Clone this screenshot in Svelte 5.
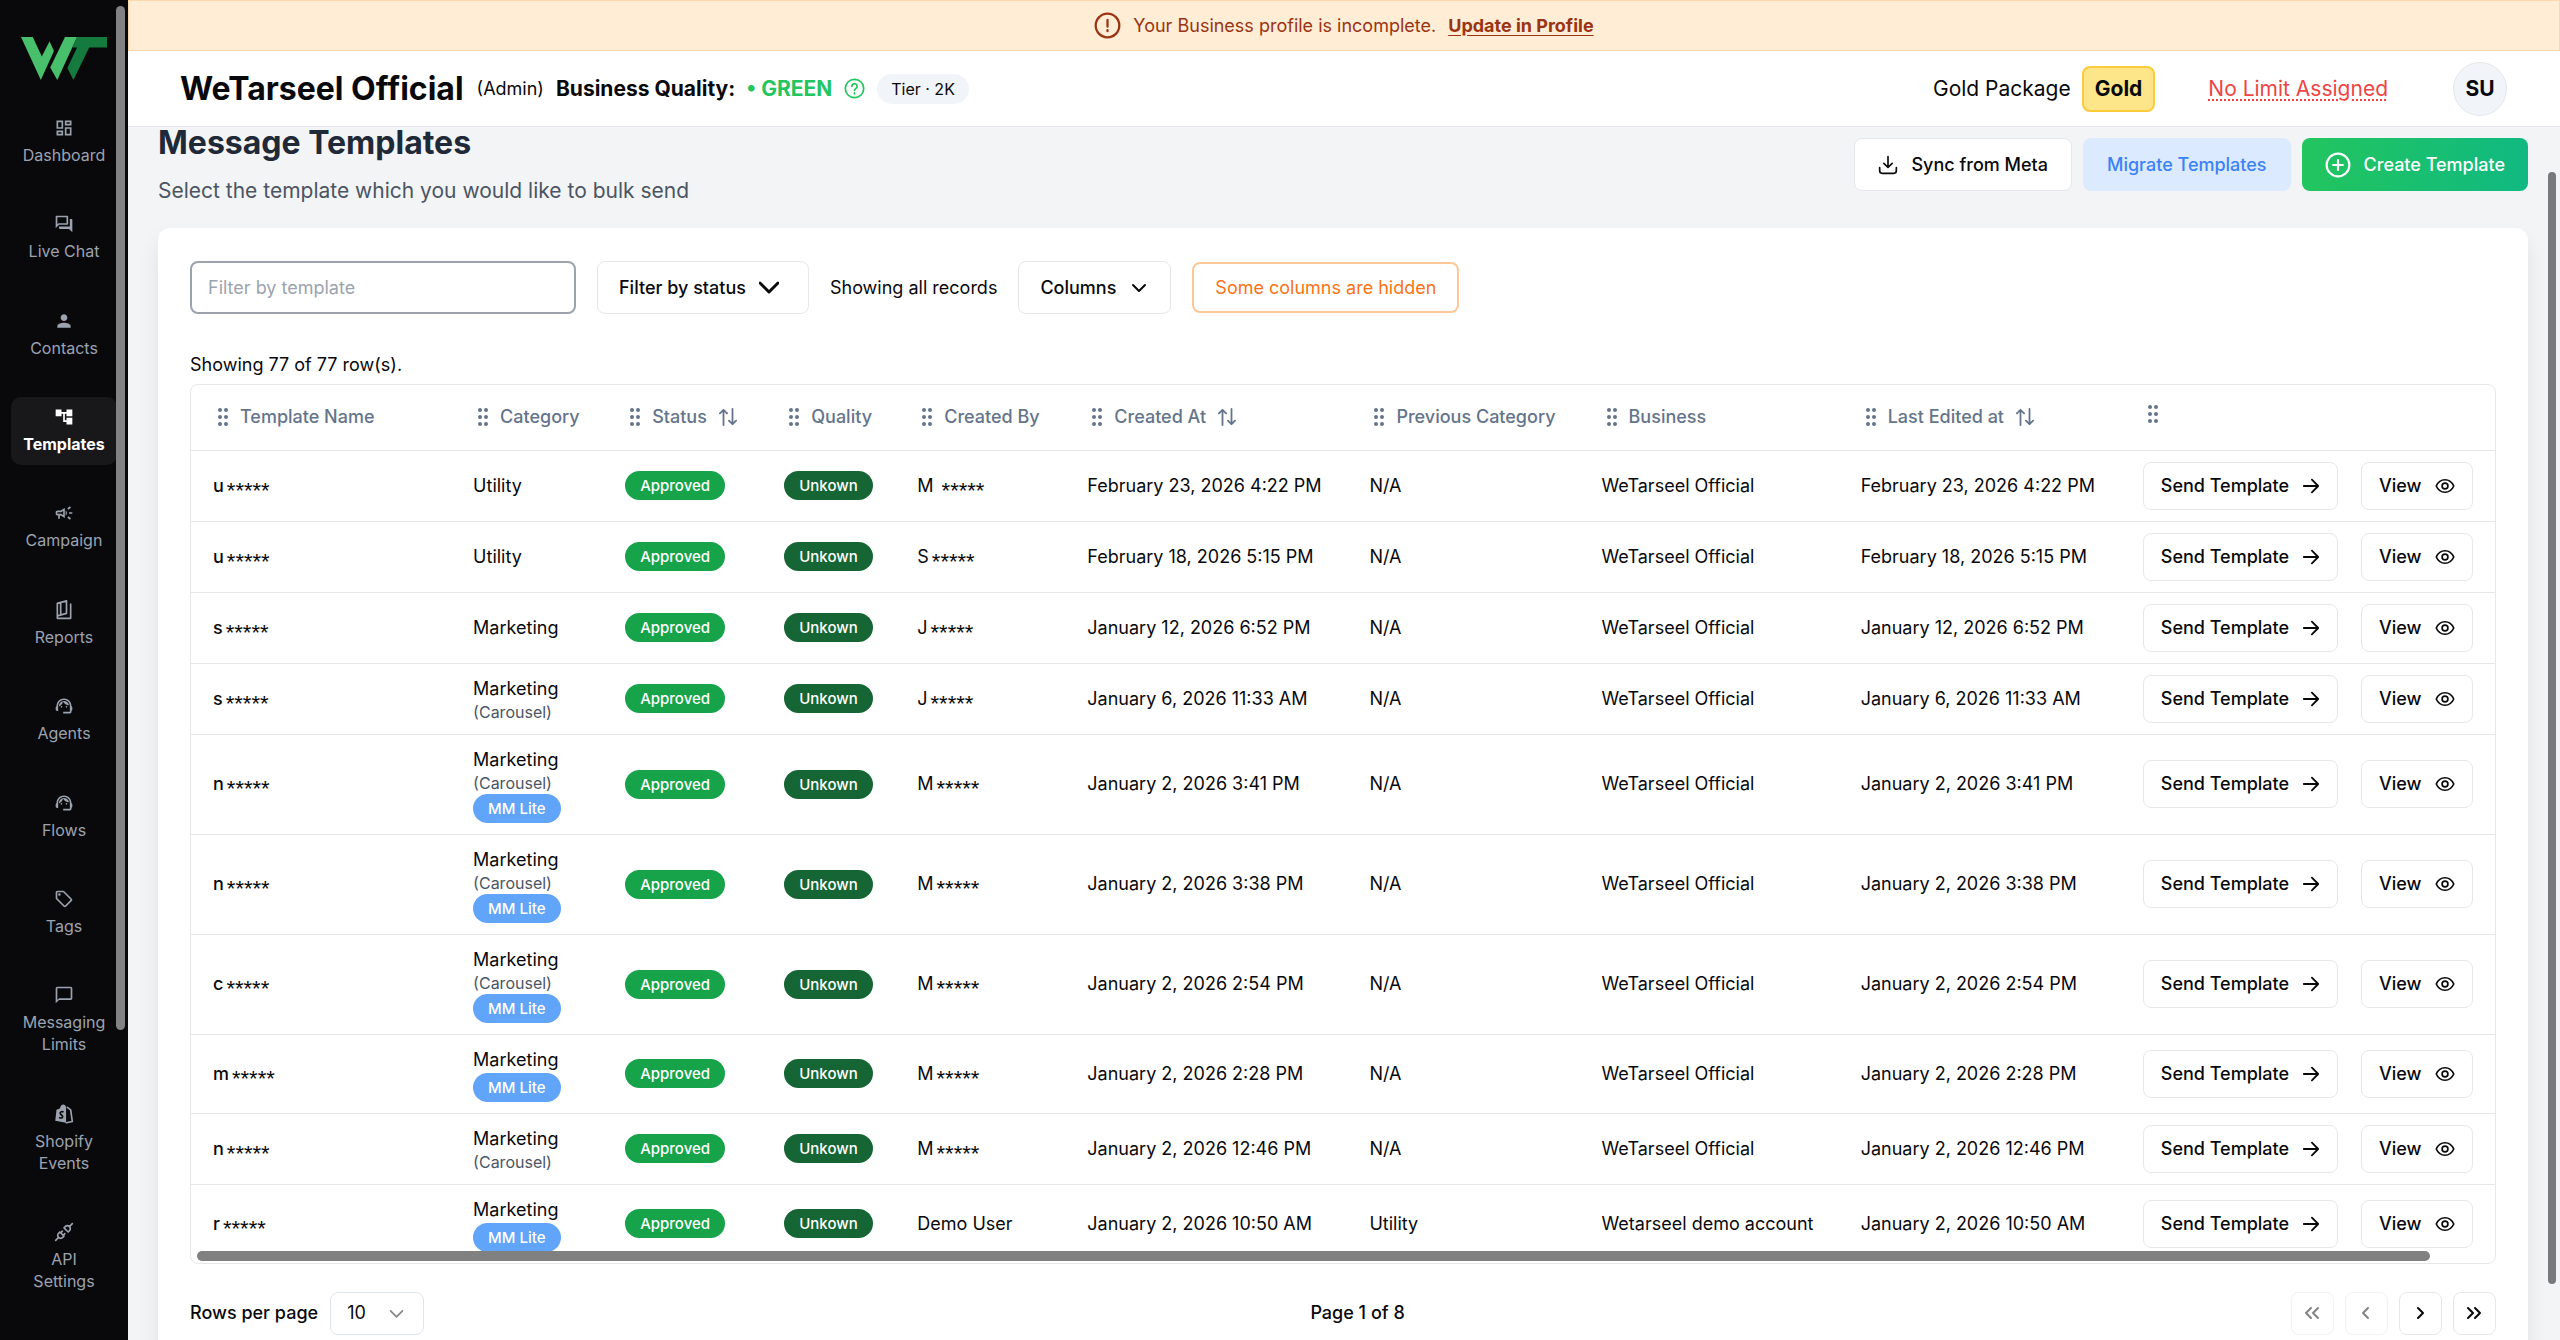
<script>
  let filter = '';
  let pageSize = '10';

  const navItems = [
    { label: 'Dashboard', icon: 'dashboard' },
    { label: 'Live Chat', icon: 'chat' },
    { label: 'Contacts', icon: 'person' },
    { label: 'Templates', icon: 'tree', active: true },
    { label: 'Campaign', icon: 'campaign' },
    { label: 'Reports', icon: 'reports' },
    { label: 'Agents', icon: 'agent' },
    { label: 'Flows', icon: 'agent' },
    { label: 'Tags', icon: 'tag' },
    { label: 'Messaging Limits', icon: 'bubble' },
    { label: 'Shopify Events', icon: 'shopify' },
    { label: 'API Settings', icon: 'plug' },
  ];

  const filledIcons = {
    dashboard: 'M19 5v2h-4V5h4M9 5v6H5V5h4m10 8v6h-4v-6h4M9 17v2H5v-2h4M21 3h-8v6h8V3zM11 3H3v10h8V3zm10 8h-8v10h8V11zm-10 4H3v6h8v-6z',
    chat: 'M15 4v7H5.17L4 12.17V4h11m1-2H3c-.55 0-1 .45-1 1v14l4-4h10c.55 0 1-.45 1-1V3c0-.55-.45-1-1-1zm5 4h-2v9H6v2c0 .55.45 1 1 1h11l4 4V7c0-.55-.45-1-1-1z',
    person: 'M12 12c2.21 0 4-1.79 4-4s-1.79-4-4-4-4 1.79-4 4 1.79 4 4 4zm0 2c-2.67 0-8 1.34-8 4v2h16v-2c0-2.66-5.33-4-8-4z',
    tree: 'M22 11V3h-7v3H9V3H2v8h7V8h2v10h4v3h7v-8h-7v3h-2V8h2v3z',
    campaign: 'M18 11v2h4v-2h-4zM16 17.61c.96.71 2.21 1.65 3.2 2.39.4-.53.8-1.07 1.2-1.6-.99-.74-2.24-1.68-3.2-2.4-.4.54-.8 1.08-1.2 1.61zM20.4 5.6c-.4-.53-.8-1.07-1.2-1.6-.99.74-2.24 1.68-3.2 2.4.4.53.8 1.07 1.2 1.6.96-.72 2.21-1.65 3.2-2.4zM4 9c-1.1 0-2 .9-2 2v2c0 1.1.9 2 2 2h1v4h2v-4h1l5 3V6L8 9H4zm5.03 1.71L11 9.53v4.94l-1.97-1.18-.48-.29H4v-2h4.55l.48-.29zM15.5 12c0-1.33-.58-2.53-1.5-3.35v6.69c.92-.81 1.5-2.01 1.5-3.34z',
    agent: 'M21 12.22C21 6.73 16.74 3 12 3c-4.69 0-9 3.65-9 9.28-.6.34-1 .98-1 1.72v2c0 1.1.9 2 2 2h1v-6.1c0-3.87 3.13-7 7-7s7 3.13 7 7V19h-8v2h8c1.1 0 2-.9 2-2v-1.22c.59-.31 1-.92 1-1.64v-2.3c0-.7-.41-1.31-1-1.62zM9 12a1 1 0 1 0 0 2 1 1 0 0 0 0-2zM15 12a1 1 0 1 0 0 2 1 1 0 0 0 0-2zM18 11.03C17.52 8.18 15.04 6 12.05 6c-3.03 0-6.29 2.51-6.03 6.45 2.47-1.01 4.33-3.21 4.86-5.89 1.31 2.63 4 4.44 7.12 4.47z',
    tag: 'M21.41 11.58l-9-9C12.05 2.22 11.55 2 11 2H4c-1.1 0-2 .9-2 2v7c0 .55.22 1.05.59 1.42l9 9c.36.36.86.58 1.41.58s1.05-.22 1.41-.59l7-7c.37-.36.59-.86.59-1.41s-.23-1.06-.59-1.42zM13 20.01L4 11V4h7v-.01l9 9-7 7.02zM6.5 5a1.5 1.5 0 1 0 0 3 1.5 1.5 0 0 0 0-3z',
    bubble: 'M20 2H4c-1.1 0-2 .9-2 2v18l4-4h14c1.1 0 2-.9 2-2V4c0-1.1-.9-2-2-2zm0 14H6l-2 2V4h16v12z',
  };

  const columns = [
    { label: 'Template Name', width: 260 },
    { label: 'Category', width: 152 },
    { label: 'Status', width: 159, sort: true },
    { label: 'Quality', width: 133 },
    { label: 'Created By', width: 170 },
    { label: 'Created At', width: 282, sort: true },
    { label: 'Previous Category', width: 232 },
    { label: 'Business', width: 259 },
    { label: 'Last Edited at', width: 282, sort: true },
    { label: '', width: 374 },
  ];
  const totalWidth = columns.reduce((sum, c) => sum + c.width, 0);

  const official = 'WeTarseel Official';
  const rows = [
    { name: 'u', category: 'Utility', by: 'M ', date: 'February 23, 2026 4:22 PM' },
    { name: 'u', category: 'Utility', by: 'S', date: 'February 18, 2026 5:15 PM' },
    { name: 's', category: 'Marketing', by: 'J', date: 'January 12, 2026 6:52 PM' },
    { name: 's', category: 'Marketing', carousel: true, by: 'J', date: 'January 6, 2026 11:33 AM' },
    { name: 'n', category: 'Marketing', carousel: true, lite: true, by: 'M', date: 'January 2, 2026 3:41 PM' },
    { name: 'n', category: 'Marketing', carousel: true, lite: true, by: 'M', date: 'January 2, 2026 3:38 PM' },
    { name: 'c', category: 'Marketing', carousel: true, lite: true, by: 'M', date: 'January 2, 2026 2:54 PM' },
    { name: 'm', category: 'Marketing', lite: true, by: 'M', date: 'January 2, 2026 2:28 PM' },
    { name: 'n', category: 'Marketing', carousel: true, by: 'M', date: 'January 2, 2026 12:46 PM' },
    { name: 'r', category: 'Marketing', lite: true, user: 'Demo User', date: 'January 2, 2026 10:50 AM', previous: 'Utility', business: 'Wetarseel demo account' },
  ];
</script>

<div class="app">
  <aside class="sidebar">
    <svg class="logo" viewBox="65 112 256 128" aria-label="WeTarseel">
      <path fill="#48bf6a" d="M65 112h35l27 58 23-45 13 29-39 86z" />
      <path fill="#48bf6a" d="M196 112h36l-59 128-21-37z" />
      <path fill="#147a3e" d="M232 112h89v31h-53l-47 97-18-36 29-61h-14z" />
    </svg>
    <nav>
      {#each navItems as item}
        <a href="#{item.icon}" class="nav-item" class:active={item.active}>
          <svg viewBox="0 0 24 24" class="nav-icon">
            {#if item.icon === 'reports'}
              <path class="line" d="M4 4v18h16V5M4 4l11-3v15L4 19M8 4v13" />
            {:else if item.icon === 'shopify'}
              <path fill="currentColor" d="M3 7l4-1.500C8 2 10 0 12 1c1 0 2 1 2.500 3v18.500L1.500 20z" />
              <path class="line" d="M16 4l4 3 2 14-7 1.500" />
              <path class="cut" d="M11.500 9.500c-2.500-1-4.500.2-4 2s3.500 2 2.800 4.200c-.6 1.600-2.800 1.300-4.200.3" />
            {:else if item.icon === 'plug'}
              <path class="line" d="M7 12l5 5-1.500 1.500a3.536 3.536 0 1 1-5-5zM17 12l-5-5 1.500-1.500a3.536 3.536 0 1 1 5 5zM2 22l3.500-3.500M18.500 5.500L22 2M10 11l-2 2M13 14l-2 2" />
            {:else}
              <path fill="currentColor" d={filledIcons[item.icon]} />
            {/if}
          </svg>
          <span>{item.label}</span>
        </a>
      {/each}
    </nav>
    <div class="sidebar-thumb"></div>
  </aside>

  <div class="main">
    <div class="banner">
      <svg class="banner-icon" viewBox="0 0 24 24"><circle cx="12" cy="12" r="10.500" /><path d="M12 7v6M12 16v1" /></svg>
      <span>Your Business profile is incomplete.</span>
      <a href="#profile">Update in Profile</a>
    </div>

    <header class="topbar">
      <strong class="brand">WeTarseel Official</strong>
      <span class="role">(Admin)</span>
      <strong class="quality">Business Quality:</strong>
      <strong class="green">• GREEN</strong>
      <svg class="help" viewBox="0 0 24 24"><circle cx="12" cy="12" r="10.500" /><path d="M9 9.500a3 3 0 1 1 4.500 2.600c-1 .6-1.500 1-1.500 2M12 17v1" /></svg>
      <span class="tier">Tier · 2K</span>
      <span class="package">Gold Package</span>
      <span class="gold">Gold</span>
      <a class="limit" href="#limits">No Limit Assigned</a>
      <button class="avatar" type="button">SU</button>
    </header>

    <main class="content">
      <div class="page-head">
        <div>
          <h1>Message Templates</h1>
          <p>Select the template which you would like to bulk send</p>
        </div>
        <div class="head-actions">
          <button class="button" type="button">
            <svg viewBox="0 0 24 24" class="icon"><path d="M12 2v13M7 10l5 5 5-5M2 15v4c0 1.500 1 3 3 3h14c2 0 3-1.500 3-3v-4" /></svg>
            Sync from Meta
          </button>
          <button class="button migrate" type="button">Migrate Templates</button>
          <button class="button create" type="button">
            <svg viewBox="0 0 24 24" class="icon large"><circle cx="12" cy="12" r="10.500" /><path d="M12 7.500v9M7.500 12h9" /></svg>
            Create Template
          </button>
        </div>
      </div>

      <section class="card">
        <div class="toolbar">
          <input type="text" placeholder="Filter by template" aria-label="Filter by template" bind:value={filter} />
          <button class="button status-filter" type="button">
            Filter by status
            <svg viewBox="0 0 20 20" class="icon bold"><path d="M1 5l9 9 9-9" /></svg>
          </button>
          <span>Showing all records</span>
          <button class="button" type="button">
            Columns
            <svg viewBox="0 0 20 20" class="icon"><path d="M4 7l6 6 6-6" /></svg>
          </button>
          <button class="button hidden-columns" type="button">Some columns are hidden</button>
        </div>

        <p class="count">Showing 77 of 77 row(s).</p>

        <div class="table-wrap">
          <table>
            <colgroup>
              {#each columns as column}
                <col style="width: {(column.width / totalWidth) * 100}%" />
              {/each}
            </colgroup>
            <thead>
              <tr>
                {#each columns as column}
                  <th>
                    <div class="th-inner" class:empty={!column.label}>
                      <svg class="grip" viewBox="0 0 10 18">
                        {#each [2, 9, 16] as y}
                          <circle cx="2" cy={y} r="2" /><circle cx="8" cy={y} r="2" />
                        {/each}
                      </svg>
                      {column.label}
                      {#if column.sort}
                        <svg class="icon sort" viewBox="0 0 20 20"><path d="M5 19V2M1 6l4-4 4 4M15 1v17M11 14l4 4 4-4" /></svg>
                      {/if}
                    </div>
                  </th>
                {/each}
              </tr>
            </thead>
            <tbody>
              {#each rows as row}
                <tr>
                  <td class="name">{row.name}<span class="mask">*****</span></td>
                  <td>
                    <div class="category">{row.category}</div>
                    {#if row.carousel}<div class="sub">(Carousel)</div>{/if}
                    {#if row.lite}<span class="badge lite">MM Lite</span>{/if}
                  </td>
                  <td><span class="badge approved">Approved</span></td>
                  <td><span class="badge unknown">Unkown</span></td>
                  <td>
                    {#if row.user}{row.user}{:else}{row.by}<span class="mask">*****</span>{/if}
                  </td>
                  <td>{row.date}</td>
                  <td>{row.previous ?? 'N/A'}</td>
                  <td>{row.business ?? official}</td>
                  <td>{row.date}</td>
                  <td>
                    <div class="row-actions">
                      <button class="button small" type="button">
                        Send Template
                        <svg viewBox="0 0 20 20" class="icon arrow"><path d="M2 10h16M11 3l7 7-7 7" /></svg>
                      </button>
                      <button class="button small" type="button">
                        View
                        <svg viewBox="0 0 24 24" class="icon"><path d="M1.500 12C3.500 7.500 7.500 4.500 12 4.500s8.500 3 10.500 7.500c-2 4.500-6 7.500-10.500 7.500S3.500 16.500 1.500 12z" /><circle cx="12" cy="12" r="3.500" /></svg>
                      </button>
                    </div>
                  </td>
                </tr>
              {/each}
            </tbody>
          </table>
          <div class="table-thumb"></div>
        </div>

        <div class="pagination">
          <div class="page-size">
            <label for="page-size">Rows per page</label>
            <div class="select">
              <select id="page-size" bind:value={pageSize}>
                <option>10</option>
                <option>20</option>
                <option>50</option>
              </select>
              <svg viewBox="0 0 20 20" class="icon"><path d="M3 7l7 7 7-7" /></svg>
            </div>
          </div>
          <span>Page 1 of 8</span>
          <div class="pager">
            <button type="button" aria-label="First page" disabled><svg viewBox="0 0 20 20" class="icon"><path d="M9 5l-5 5 5 5M16 5l-5 5 5 5" /></svg></button>
            <button type="button" aria-label="Previous page" disabled><svg viewBox="0 0 20 20" class="icon"><path d="M12 5l-5 5 5 5" /></svg></button>
            <button type="button" aria-label="Next page"><svg viewBox="0 0 20 20" class="icon"><path d="M8 5l5 5-5 5" /></svg></button>
            <button type="button" aria-label="Last page"><svg viewBox="0 0 20 20" class="icon"><path d="M4 5l5 5-5 5M11 5l5 5-5 5" /></svg></button>
          </div>
        </div>
      </section>
      <div class="page-thumb"></div>
    </main>
  </div>
</div>

<style>
  .app {
    display: flex;
    height: 100vh;
    overflow: hidden;
    font-family: Inter, 'Liberation Sans', sans-serif;
    font-size: 18px;
    line-height: 26px;
    color: #09090b;
  }

  .app * {
    box-sizing: border-box;
  }

  h1,
  p {
    margin: 0;
  }

  button,
  input,
  select {
    font: inherit;
    color: inherit;
  }

  button {
    cursor: pointer;
  }

  .icon {
    width: 20px;
    height: 20px;
    flex: none;
    fill: none;
    stroke: currentColor;
    stroke-width: 2;
    stroke-linecap: round;
    stroke-linejoin: round;
  }

  .sidebar {
    position: relative;
    flex: none;
    display: flex;
    flex-direction: column;
    width: 128px;
    padding: 37px 11px 38px;
    background: #09090b;
  }

  .logo {
    align-self: center;
    width: 86px;
    height: 43px;
    margin-bottom: 28px;
  }

  nav {
    flex: 1;
    display: flex;
    flex-direction: column;
    justify-content: space-between;
  }

  .nav-item {
    display: flex;
    flex-direction: column;
    align-items: center;
    gap: 6px;
    padding: 10px 4px;
    border-radius: 10px;
    font-size: 16px;
    line-height: 22px;
    text-align: center;
    text-decoration: none;
    color: #9ca3af;
  }

  .nav-item span {
    max-width: 88px;
  }

  .nav-item.active {
    background: #18181b;
    color: #fff;
    font-weight: 700;
  }

  .nav-icon {
    width: 22px;
    height: 20px;
  }

  .line {
    fill: none;
    stroke: currentColor;
    stroke-width: 2;
    stroke-linecap: round;
    stroke-linejoin: round;
  }

  .cut {
    fill: none;
    stroke: #09090b;
    stroke-width: 2;
  }

  .sidebar-thumb {
    position: absolute;
    top: 6px;
    bottom: 310px;
    right: 3px;
    width: 9px;
    border-radius: 5px;
    background: #828282;
  }

  .main {
    flex: 1;
    min-width: 0;
    display: flex;
    flex-direction: column;
  }

  .banner {
    flex: none;
    display: flex;
    justify-content: center;
    align-items: center;
    gap: 12px;
    height: 51px;
    border: 1px solid #fed7aa;
    background: #ffedd5;
    color: #9a3412;
  }

  .banner a {
    color: inherit;
    font-weight: 700;
    text-underline-offset: 3px;
  }

  .banner-icon,
  .help {
    width: 27px;
    height: 27px;
    fill: none;
    stroke: currentColor;
    stroke-width: 2;
    stroke-linecap: round;
  }

  .topbar {
    flex: none;
    display: flex;
    align-items: center;
    height: 76px;
    padding: 0 53px 0 52px;
    border-bottom: 1px solid #e5e7eb;
    background: #fff;
    box-shadow: 0 1px 1px rgba(0, 0, 0, 0.06);
    font-size: 21px;
  }

  .brand {
    font-size: 32px;
    margin-right: 13px;
  }

  .role {
    font-size: 18px;
    margin-right: 12px;
  }

  .quality {
    margin-right: 11px;
  }

  .green {
    color: #22c55e;
    margin-right: 12px;
  }

  .help {
    width: 21px;
    height: 21px;
    margin-right: 12px;
    color: #22c55e;
  }

  .tier {
    padding: 2px 14px;
    border-radius: 15px;
    background: #f1f5f9;
    font-size: 16px;
  }

  .package {
    margin-left: auto;
    margin-right: 11px;
  }

  .gold {
    padding: 8px 11px;
    border: 2px solid #fbcb3c;
    border-radius: 8px;
    background: #fde68a;
    font-weight: 700;
  }

  .limit {
    margin: 0 65px 0 53px;
    color: #ef4444;
    text-decoration: underline dotted;
    text-underline-offset: 4px;
  }

  .avatar {
    width: 54px;
    height: 54px;
    padding: 0;
    border: 1px solid #e5e7eb;
    border-radius: 50%;
    background: #f1f5f9;
    font-weight: 700;
  }

  .content {
    position: relative;
    flex: 1;
    min-height: 0;
    padding: 0 32px 0 30px;
    background: #f3f4f6;
  }

  .page-head {
    display: flex;
    justify-content: space-between;
    align-items: flex-start;
    margin-bottom: 22px;
  }

  h1 {
    font-size: 32px;
    line-height: 32px;
    font-weight: 700;
    color: #1f2937;
  }

  .page-head p {
    margin-top: 18px;
    font-size: 21px;
    line-height: 28px;
    color: #4b5563;
  }

  .head-actions {
    display: flex;
    gap: 11px;
    padding-top: 11px;
  }

  .button {
    display: flex;
    align-items: center;
    justify-content: center;
    gap: 13px;
    height: 53px;
    padding: 0 23px;
    border: 1px solid #e5e7eb;
    border-radius: 8px;
    background: #fff;
    font-weight: 500;
    white-space: nowrap;
  }

  .migrate {
    border-color: #dbeafe;
    background: #dbeafe;
    color: #3b82f6;
  }

  .create {
    border: none;
    background: linear-gradient(90deg, #22c55e, #10b981);
    color: #fff;
  }

  .icon.large {
    width: 26px;
    height: 26px;
  }

  .icon.bold {
    stroke-width: 3;
  }

  .card {
    margin-top: 23px;
    padding: 33px 32px;
    border-radius: 12px;
    background: #fff;
    box-shadow: 0 12px 20px rgba(0, 0, 0, 0.08);
  }

  .toolbar {
    display: flex;
    align-items: center;
    gap: 21px;
  }

  .toolbar input {
    width: 386px;
    height: 53px;
    padding: 0 16px;
    border: 2px solid #9ca3af;
    border-radius: 8px;
    outline: none;
  }

  .toolbar input::placeholder {
    color: #9ca3af;
  }

  .toolbar .button {
    padding: 0 21px;
  }

  .toolbar .status-filter {
    padding-right: 29px;
  }

  .toolbar .hidden-columns {
    height: 51px;
    border: 2px solid #fdc897;
    color: #f97316;
    font-weight: 400;
  }

  .count {
    margin: 38px 0 6px;
  }

  .table-wrap {
    position: relative;
    border: 1px solid #e5e7eb;
    border-radius: 8px;
    overflow: hidden;
  }

  table {
    width: 100%;
    table-layout: fixed;
    border-collapse: collapse;
  }

  th {
    height: 65px;
    padding: 0 0 0 27px;
    text-align: left;
    font-weight: 500;
    color: #64748b;
    white-space: nowrap;
  }

  td {
    padding: 11px 0 11px 22px;
    border-top: 1px solid #e5e7eb;
    white-space: nowrap;
  }

  .th-inner {
    display: flex;
    align-items: center;
    gap: 12px;
  }

  .th-inner.empty {
    padding-bottom: 7px;
  }

  .grip {
    width: 10px;
    height: 18px;
    fill: currentColor;
  }

  .sort {
    width: 18px;
    height: 18px;
  }

  .name {
    font-weight: 500;
  }

  .mask {
    margin-left: 3px;
    font-family: 'Liberation Sans', Arial, sans-serif;
    font-size: 22px;
    font-weight: 400;
    line-height: 0;
    vertical-align: -6px;
  }

  .category {
    line-height: 27px;
  }

  .sub {
    font-size: 16px;
    line-height: 21px;
    color: #4b5563;
  }

  .badge {
    display: block;
    width: max-content;
    padding: 0 15px;
    border-radius: 15px;
    font-size: 15px;
    line-height: 29px;
    font-weight: 500;
    color: #fff;
  }

  .approved {
    background: #16a34a;
  }

  .unknown {
    background: #166534;
  }

  .lite {
    background: #60a5fa;
  }

  .row-actions {
    display: flex;
    gap: 23px;
  }

  .small {
    gap: 13px;
    height: 48px;
    padding: 0 17px;
  }

  .arrow {
    width: 18px;
    height: 18px;
  }

  .table-thumb {
    position: absolute;
    left: 6px;
    right: 65px;
    bottom: 2px;
    height: 10px;
    border-radius: 5px;
    background: #808080;
  }

  .pagination {
    display: flex;
    justify-content: space-between;
    align-items: center;
    margin-top: 28px;
    font-weight: 500;
  }

  .page-size {
    display: flex;
    align-items: center;
    gap: 12px;
  }

  .select {
    position: relative;
  }

  .select select {
    width: 94px;
    height: 43px;
    padding: 0 16px;
    border: 1px solid #dfe5ee;
    border-radius: 8px;
    background: #fff;
    font-weight: 400;
    appearance: none;
  }

  .select .icon {
    position: absolute;
    top: 13px;
    right: 19px;
    width: 17px;
    height: 17px;
    color: #858585;
    pointer-events: none;
  }

  .pager {
    display: flex;
    gap: 11px;
  }

  .pager button {
    display: flex;
    align-items: center;
    justify-content: center;
    width: 43px;
    height: 43px;
    padding: 0;
    border: 1px solid #e5e7eb;
    border-radius: 8px;
    background: #fff;
  }

  .pager button:disabled {
    opacity: 0.5;
  }

  .page-thumb {
    position: absolute;
    top: 45px;
    bottom: 56px;
    right: 4px;
    width: 8px;
    border-radius: 4px;
    background: #777a7d;
  }
</style>
